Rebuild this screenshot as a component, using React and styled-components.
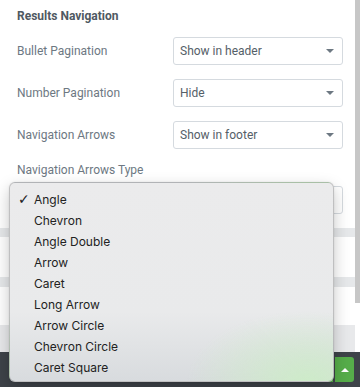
import React from 'react';
import styled, { createGlobalStyle } from 'styled-components';

const GlobalStyle = createGlobalStyle`
  html, body {
    margin: 0;
    padding: 0;
    background: #ffffff;
  }
  * {
    box-sizing: border-box;
  }
`;

const Page = styled.div`
  position: relative;
  width: 360px;
  height: 387px;
  overflow: hidden;
  display: flex;
  flex-direction: column;
  font-family: Roboto, "Liberation Sans", sans-serif;
`;

const Body = styled.div`
  flex: 1;
  display: flex;
  background: #ffffff;
`;

const Content = styled.div`
  flex: 1;
  display: flex;
  flex-direction: column;
`;

const ScrollTrack = styled.div`
  width: 5px;
  display: flex;
  flex-direction: column;
`;

const ScrollThumb = styled.div`
  height: 303px;
  background: #c7c7c7;
`;

const Section = styled.div`
  padding: 0 12px 14px 17px;
  display: flex;
  flex-direction: column;
`;

const Title = styled.div`
  padding-top: 9px;
  height: 37px;
  line-height: 15px;
  font-size: 12px;
  font-weight: 700;
  color: #4f5962;
`;

const Row = styled.div`
  height: 28px;
  display: flex;
  align-items: center;
  justify-content: space-between;
  margin-bottom: 14px;
`;

const Label = styled.div`
  font-size: 12px;
  color: #6d7882;
  line-height: 15px;
`;

const Select = styled.div`
  width: ${(p) => (p.$full ? '100%' : '170px')};
  height: 28px;
  margin-top: ${(p) => p.$top || 0}px;
  border: 1px solid #d5dadf;
  border-radius: 3px;
  display: flex;
  align-items: center;
  justify-content: space-between;
  padding: 0 8px 0 6px;
  font-size: 12px;
  color: #556068;
  background: #ffffff;
`;

const Caret = styled.span`
  width: 0;
  height: 0;
  border-left: 4px solid transparent;
  border-right: 4px solid transparent;
  border-top: 4px solid #6d7882;
`;

const Band = styled.div`
  height: ${(p) => p.$h}px;
  background: ${(p) => p.$bg};
`;

const Footer = styled.div`
  height: 35px;
  background: #3e4349;
  display: flex;
  align-items: center;
  justify-content: flex-end;
  padding: 0 6px 0 0;
  gap: 2px;
`;

const PublishButton = styled.div`
  width: 86px;
  height: 25px;
  background: #56ad4a;
  border-radius: 3px 0 0 3px;
`;

const MoreButton = styled.div`
  width: 19px;
  height: 25px;
  background: #56ad4a;
  border-radius: 0 3px 3px 0;
  display: flex;
  align-items: center;
  justify-content: center;
`;

const UpCaret = styled.span`
  width: 0;
  height: 0;
  border-left: 4px solid transparent;
  border-right: 4px solid transparent;
  border-bottom: 4px solid #ffffff;
`;

const Popup = styled.ul`
  position: absolute;
  left: 9px;
  top: 182px;
  width: 325px;
  height: 200px;
  margin: 0;
  padding: 6px 0 0 0;
  list-style: none;
  border-radius: 6px;
  border: 0.5px solid rgba(0, 0, 0, 0.18);
  background:
    radial-gradient(ellipse 120px 70px at 92% 100%, rgba(205, 236, 200, 0.95), rgba(205, 236, 200, 0) 100%),
    linear-gradient(to bottom, #ebebec 0%, #e9eaeb 65%, #d8dbde 100%);
  box-shadow: 0 6px 16px rgba(0, 0, 0, 0.22), 0 0 2px rgba(0, 0, 0, 0.1);
  font-family: Inter, "Noto Sans", sans-serif;
`;

const Option = styled.li`
  position: relative;
  height: 21px;
  line-height: 21px;
  padding-left: 24px;
  font-size: 12px;
  color: #222222;
`;

const Check = styled.span`
  position: absolute;
  left: 8px;
  top: 0;
  font-family: "DejaVu Sans", sans-serif;
  font-size: 14px;
  font-weight: 700;
  color: #222222;
`;

const options = [
  'Angle',
  'Chevron',
  'Angle Double',
  'Arrow',
  'Caret',
  'Long Arrow',
  'Arrow Circle',
  'Chevron Circle',
  'Caret Square',
];

const rows = [
  ['Bullet Pagination', 'Show in header'],
  ['Number Pagination', 'Hide'],
  ['Navigation Arrows', 'Show in footer'],
];

export default function App() {
  return (
    <>
      <GlobalStyle />
      <Page>
        <Body>
          <Content>
            <Section>
              <Title>Results Navigation</Title>
              {rows.map(([label, value]) => (
                <Row key={label}>
                  <Label>{label}</Label>
                  <Select>
                    {value}
                    <Caret />
                  </Select>
                </Row>
              ))}
              <Label>Navigation Arrows Type</Label>
              <Select $full $top={8}>
                Angle
                <Caret />
              </Select>
            </Section>
            <Band $h={9} $bg="#e6e8ea" />
            <Band $h={40} $bg="#ffffff" />
            <Band $h={10} $bg="#e6e8ea" />
            <Band $h={38} $bg="#ffffff" />
            <Band $h={27} $bg="#e8e9eb" />
          </Content>
          <ScrollTrack>
            <ScrollThumb />
          </ScrollTrack>
        </Body>
        <Footer>
          <PublishButton />
          <MoreButton>
            <UpCaret />
          </MoreButton>
        </Footer>
        <Popup>
          {options.map((o, i) => (
            <Option key={o}>
              {i === 0 && <Check>✓</Check>}
              {o}
            </Option>
          ))}
        </Popup>
      </Page>
    </>
  );
}
